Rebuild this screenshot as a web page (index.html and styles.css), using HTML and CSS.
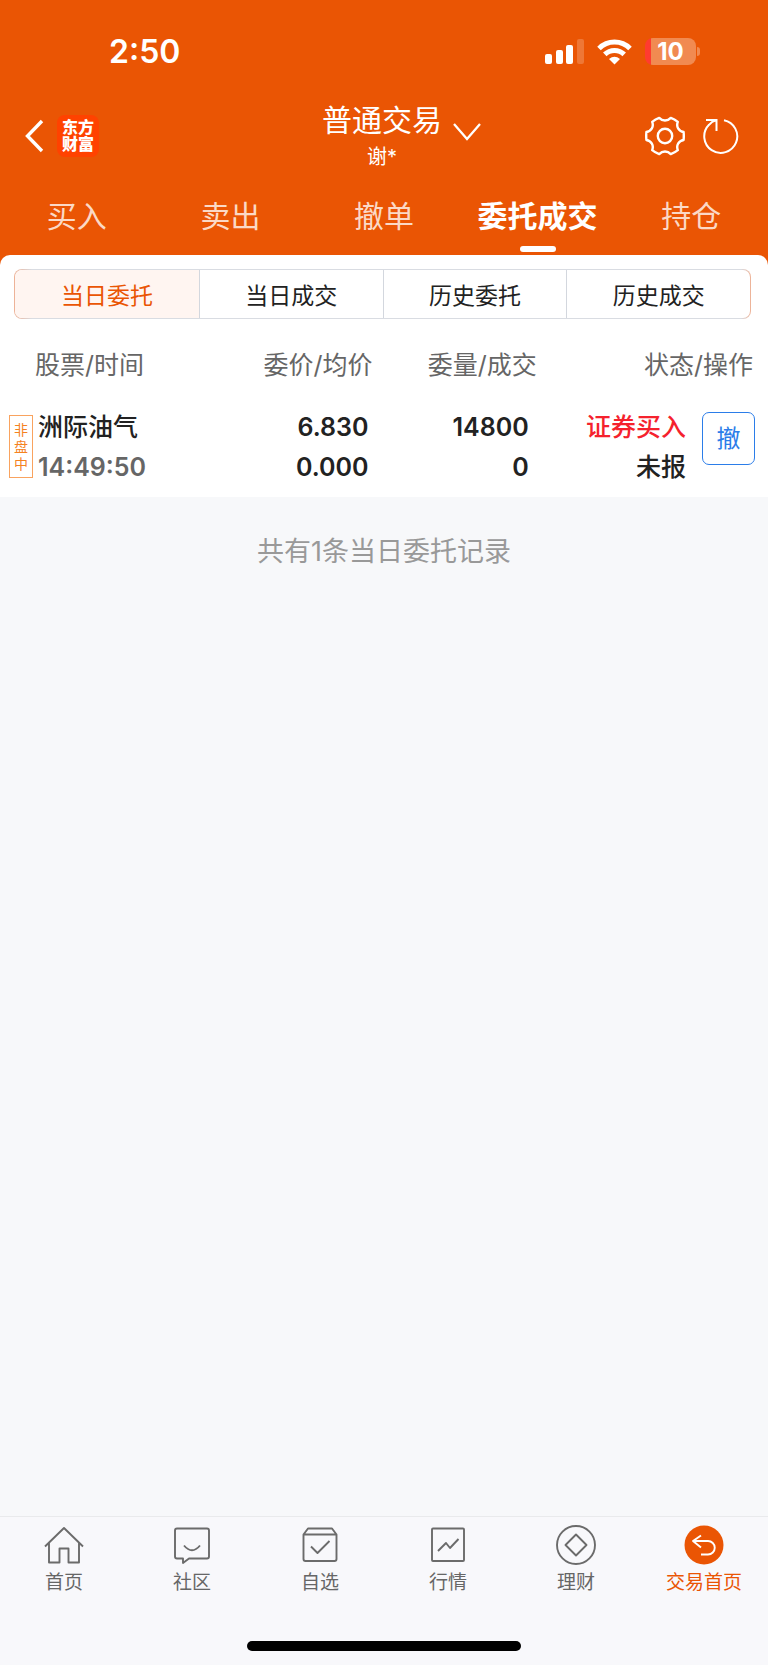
FILE: index.html
```html
<!DOCTYPE html>
<html lang="zh-CN">
<head>
    <meta charset="UTF-8" />
    <title>普通交易</title>
    <meta name="viewport" content="width=device-width, initial-scale=1.0" />
    <link rel="stylesheet" href="styles.css">
</head>
<body>
<header class="header">
    <div class="status-bar">
        <span class="clock">2:50</span>
        <div class="status-icons">
            <svg width="39" height="26" viewBox="0 0 39 26" fill="#fff">
                <rect x="0" y="15" width="7" height="10" rx="2" />
                <rect x="11" y="11" width="7" height="14" rx="2" />
                <rect x="21" y="6" width="7" height="19" rx="2" />
                <rect x="32" y="0" width="7" height="25" rx="2" opacity="0.2" />
            </svg>
            <svg width="35" height="26" viewBox="0 0 35 26" fill="none" stroke="#fff" stroke-width="5">
                <path d="M2 9.5 A22 22 0 0 1 33 9.5" />
                <path d="M7.8 15.4 A13.8 13.8 0 0 1 27.2 15.4" />
                <path d="M17.5 25.5 L12 20 Q17.5 15.5 23 20 Z" fill="#fff" stroke="none" />
            </svg>
            <div class="battery"><span class="battery-level">10</span><i class="battery-tip"></i></div>
        </div>
    </div>

    <div class="title-bar">
        <div class="title-left">
            <button class="icon-btn" aria-label="返回">
                <svg width="20" height="34" viewBox="0 0 20 34" fill="none" stroke="#fff" stroke-width="3.4"><path d="M17 2 L2.500 17 L17 32" /></svg>
            </button>
            <a href="#" class="logo">东方<br>财富</a>
        </div>
        <div class="title">
            <h1>普通交易</h1>
            <p>谢*</p>
        </div>
        <div class="title-right">
            <button class="icon-btn switch" aria-label="切换账户">
                <svg width="28" height="20" viewBox="0 0 28 20" fill="none" stroke="#fff" stroke-width="2.3"><path d="M1 2 L14 17 L27 2" /></svg>
            </button>
            <button class="icon-btn" aria-label="设置">
                <svg width="40" height="40" viewBox="-20 -20 40 40" fill="none" stroke="#fff" stroke-width="2.4" stroke-linejoin="round">
                    <path d="M18.6 -4 Q19 0 18.6 4 C13.5 5 11 9.5 12.8 14.1 Q9.5 16.8 5.8 18.1 C2.5 14.6 -2.5 14.6 -5.8 18.1 Q-9.5 16.8 -12.8 14.1 C-11 9.5 -13.5 5 -18.6 4 Q-19 0 -18.6 -4 C-13.5 -5 -11 -9.5 -12.8 -14.1 Q-9.5 -16.8 -5.8 -18.1 C-2.5 -14.6 2.5 -14.6 5.8 -18.1 Q9.5 -16.8 12.8 -14.1 C11 -9.5 13.5 -5 18.6 -4 Z" />
                    <circle r="7.2" />
                </svg>
            </button>
            <button class="icon-btn" aria-label="刷新">
                <svg width="36" height="36" viewBox="0 0 36 36" fill="none" stroke="#fff" stroke-width="2">
                    <path d="M21 2.2 A16.5 16.5 0 1 1 6 6.8 Q8.500 3.500 13.500 2 M3 2 H13.500 V13" />
                </svg>
            </button>
        </div>
    </div>

    <nav class="tabs">
        <a href="#" class="tab">买入</a>
        <a href="#" class="tab">卖出</a>
        <a href="#" class="tab">撤单</a>
        <a href="#" class="tab active">委托成交</a>
        <a href="#" class="tab">持仓</a>
    </nav>
</header>

<main class="main">
    <section class="panel">
        <div class="segments">
            <button class="segment active">当日委托</button>
            <button class="segment">当日成交</button>
            <button class="segment">历史委托</button>
            <button class="segment">历史成交</button>
        </div>

        <table class="orders">
            <thead>
                <tr>
                    <th class="col-stock">股票/时间</th>
                    <th class="col-price">委价/均价</th>
                    <th class="col-amount">委量/成交</th>
                    <th class="col-status">状态/操作</th>
                </tr>
            </thead>
            <tbody>
                <tr>
                    <td>
                        <div class="stock">
                            <span class="badge">非盘中</span>
                            <div>
                                <div>洲际油气</div>
                                <div class="time">14:49:50</div>
                            </div>
                        </div>
                    </td>
                    <td class="price">6.830<br>0.000</td>
                    <td class="amount">14800<br>0</td>
                    <td>
                        <div class="state">
                            <div><span class="buy">证券买入</span><br>未报</div>
                            <button class="cancel">撤</button>
                        </div>
                    </td>
                </tr>
            </tbody>
        </table>
    </section>

    <p class="summary">共有1条当日委托记录</p>
</main>

<footer class="footer">
    <nav class="bottom-nav">
        <a href="#" class="nav-item">
            <svg width="40" height="40" viewBox="0 0 40 40"><path d="M1 21.500 L20 3 L39 21.500 M5 18 V37.500 H15.500 V23.500 H24.500 V37.500 H35 V18" /></svg>
            首页
        </a>
        <a href="#" class="nav-item">
            <svg width="40" height="40" viewBox="0 0 40 40"><path d="M5 3.500 H35 Q37 3.500 37 5.500 V31.500 Q37 33.500 35 33.500 H17 L11 38 V33.500 H5 Q3 33.500 3 31.500 V5.500 Q3 3.500 5 3.500 Z M12 20.500 Q20 30 28 20.500" /></svg>
            社区
        </a>
        <a href="#" class="nav-item">
            <svg width="40" height="40" viewBox="0 0 40 40"><path d="M3.500 9.500 H36.500 V34 Q36.500 36 34.500 36 H5.500 Q3.500 36 3.500 34 Z M3.500 9.500 L8 3.500 H32 L36.500 9.500 M11 21.500 L17.500 28 L29.500 16" /></svg>
            自选
        </a>
        <a href="#" class="nav-item">
            <svg width="40" height="40" viewBox="0 0 40 40"><rect x="4" y="3.500" width="32" height="32.500" rx="1" /><path d="M10 26 L18 18 L22 23 L30.500 14" /></svg>
            行情
        </a>
        <a href="#" class="nav-item">
            <svg width="40" height="40" viewBox="0 0 40 40"><circle cx="20" cy="20" r="19" /><path d="M20 9.500 L30.500 20 L20 30.500 L9.500 20 Z" /></svg>
            理财
        </a>
        <a href="#" class="nav-item active">
            <svg width="40" height="40" viewBox="0 0 40 40"><circle class="disc" cx="20" cy="20" r="19.500" /><path d="M17 10.500 L9 16 L17 22.500 M9 16 H24 A6.700 6.700 0 0 1 24 29.500 H17" /></svg>
            交易首页
        </a>
    </nav>
    <div class="home-indicator"></div>
</footer>
</body>
</html>
```
FILE: styles.css
```css
* {
    box-sizing: border-box;
    margin: 0;
    padding: 0;
}

body {
    display: flex;
    flex-direction: column;
    min-height: 100vh;
    background: #f7f8fa;
    color: #222;
    font-family: Inter, "Noto Sans CJK SC", sans-serif;
}

a { color: inherit; text-decoration: none; }

button {
    font: inherit;
    color: inherit;
    background: none;
    border: 0;
}

svg { display: block; }

/* header */

.header {
    background: #ea5504;
    color: #fff;
    padding-bottom: 13px;
}

.status-bar {
    display: flex;
    align-items: center;
    justify-content: space-between;
    height: 99px;
    padding: 4px 68px 0 109px;
}

.clock {
    font-size: 32px;
    font-weight: 600;
}

.status-icons {
    display: flex;
    align-items: center;
    gap: 13px;
}

.battery {
    display: flex;
    align-items: center;
    gap: 1px;
}

.battery-level {
    width: 51px;
    height: 27px;
    border-radius: 8px;
    background: linear-gradient(to right, #ff3b30 6px, #f18a51 6px);
    font-size: 24px;
    font-weight: 700;
    line-height: 27px;
    text-align: center;
}

.battery-tip {
    width: 3px;
    height: 9px;
    border-radius: 0 4px 4px 0;
    background: #f18a51;
}

.title-bar {
    display: grid;
    grid-template-columns: 1fr auto 1fr;
    align-items: center;
    height: 72px;
    padding: 0 29px 0 25px;
}

.title-left,
.title-right {
    display: flex;
    align-items: center;
}

.title-left { gap: 12px; }
.title-right { gap: 18px; }

.logo {
    width: 42px;
    height: 42px;
    padding-top: 4px;
    border-radius: 8px;
    background: #ff4200;
    font-size: 16px;
    font-weight: 900;
    line-height: 17px;
    text-align: center;
}

.title { text-align: center; }

.title h1 {
    font-size: 30px;
    font-weight: 400;
    line-height: 42px;
}

.title p {
    font-size: 20px;
    line-height: 32px;
}

.switch { margin: 0 auto 8px 11px; }

.tabs {
    display: grid;
    grid-template-columns: repeat(5, 1fr);
}

.tab {
    display: flex;
    flex-direction: column;
    align-items: center;
    gap: 10px;
    padding: 25px 0 0;
    font-size: 30px;
    line-height: 40px;
    color: #fbd9c6;
}

.tab::after {
    content: "";
    width: 36px;
    height: 6px;
    border-radius: 3px;
}

.tab.active {
    color: #fff;
    font-weight: 700;
}

.tab.active::after { background: #fff; }

/* orders */

.main { flex: 1; }

.panel {
    margin-top: -10px;
    padding: 14px 0 10px;
    border-radius: 10px 10px 0 0;
    background: #fff;
}

/* the frame is tinted orange at both rounded ends */
.segments {
    display: grid;
    grid-template-columns: repeat(4, 1fr);
    height: 50px;
    margin: 0 17px 0 14px;
    border: 1px solid transparent;
    border-radius: 8px;
    background:
        linear-gradient(#fff, #fff) padding-box,
        linear-gradient(to right, #eeb296, #d9dce2 18px calc(100% - 10px), #eeb296) border-box;
    overflow: hidden;
}

.segment {
    font-size: 23px;
}

.segment + .segment { border-left: 1px solid #d3d7de; }

.segment.active {
    background: #fff5f1;
    color: #ea5504;
}

.orders {
    width: 100%;
    padding: 0 13px 0 9px;
    border-spacing: 0;
    table-layout: fixed;
    font-size: 25px;
    text-align: right;
}

.orders th {
    padding: 31px 2px 27px;
    font-weight: 400;
    line-height: 30px;
    color: #666;
}

.orders td {
    font-weight: 600;
    line-height: 40px;
    vertical-align: top;
}

.orders td.price { padding-right: 6px; }
.orders td.amount { padding-right: 10px; }

.orders .col-stock { width: 26%; padding-left: 26px; text-align: left; }
.orders .col-price { width: 23%; }
.orders .col-amount { width: 22%; }
.orders .col-status { width: 29%; }

.stock {
    display: flex;
    align-items: center;
    gap: 5px;
    text-align: left;
    font-weight: 500;
}

.badge {
    width: 24px;
    margin-bottom: 1px;
    padding: 5px 4px;
    border: 1px solid #f9a35f;
    font-size: 14px;
    font-weight: 400;
    line-height: 17px;
    color: #f5821f;
}

.time {
    font-weight: 600;
    color: #666;
}

.state {
    display: flex;
    justify-content: flex-end;
    gap: 16px;
    font-weight: 500;
}

.buy { color: #f5222d; }

.cancel {
    width: 53px;
    height: 53px;
    margin-top: 5px;
    border: 1px solid #2b7de9;
    border-radius: 7px;
    font-size: 24px;
    font-weight: 400;
    color: #2b7de9;
}

.summary {
    padding-top: 37px;
    font-size: 27px;
    line-height: 36px;
    text-align: center;
    color: #999;
}

/* bottom navigation */

.footer {
    border-top: 1px solid #e9eaec;
    background: #f8f8fb;
    padding-bottom: 14px;
}

.bottom-nav {
    display: grid;
    grid-template-columns: repeat(6, 1fr);
    padding: 8px 0 44px;
}

.nav-item {
    display: flex;
    flex-direction: column;
    align-items: center;
    gap: 4px;
    font-size: 19px;
    line-height: 28px;
    color: #666;
}

.nav-item svg {
    fill: none;
    stroke: #6b6b6b;
    stroke-width: 1.9;
    stroke-linejoin: round;
}

.nav-item.active { color: #ea5504; }
.nav-item.active svg { stroke: #fff; }
.nav-item .disc { fill: #ea5504; stroke: none; }

.home-indicator {
    width: 274px;
    height: 10px;
    margin: 0 auto;
    border-radius: 5px;
    background: #000;
}
```
